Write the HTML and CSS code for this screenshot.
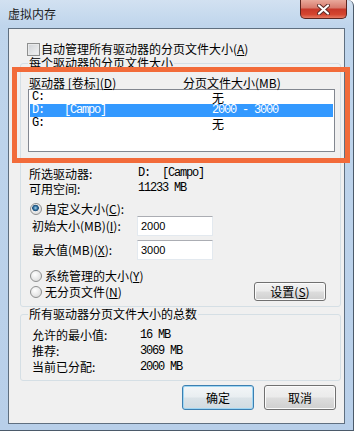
FILE: index.html
```html
<!DOCTYPE html>
<html lang="zh-CN">
<head>
    <meta charset="UTF-8">
    <title>虚拟内存</title>
    <link rel="stylesheet" href="styles.css">
</head>
<body>
    <div class="window">
        <div class="titlebar">
            <span class="title">虚拟内存</span>
            <span class="close">
                <svg width="13" height="11" viewBox="0 0 13 11">
                    <path d="M2 1.5 L11 9.5 M11 1.5 L2 9.5" stroke="#5a2a26" stroke-width="4" stroke-linecap="round"/>
                    <path d="M2 1.5 L11 9.5 M11 1.5 L2 9.5" stroke="#fff" stroke-width="2.2" stroke-linecap="round"/>
                </svg>
            </span>
        </div>

        <div class="client">
            <div class="check-row">
                <span class="checkbox"></span>
                <span>自动管理所有驱动器的分页文件大小(<u>A</u>)</span>
            </div>

            <fieldset class="group group-drives">
                <legend>每个驱动器的分页文件大小</legend>

                <div class="list-head">
                    <span class="col-drive">驱动器 [卷标](<u>D</u>)</span>
                    <span>分页文件大小(MB)</span>
                </div>

                <div class="listbox">
                    <div class="list-row">
                        <span class="c-drive mono">C:</span><span class="c-label mono"></span><span class="c-size">无</span>
                    </div>
                    <div class="list-row selected">
                        <span class="c-drive mono">D:</span><span class="c-label mono">[Campo]</span><span class="c-size mono">2000 - 3000</span>
                    </div>
                    <div class="list-row">
                        <span class="c-drive mono">G:</span><span class="c-label mono"></span><span class="c-size">无</span>
                    </div>
                </div>

                <div class="info-row first">
                    <span class="info-label">所选驱动器:</span><span class="mono">D:  [Campo]</span>
                </div>
                <div class="info-row">
                    <span class="info-label">可用空间:</span><span class="mono">11233 MB</span>
                </div>

                <div class="radio-row custom">
                    <span class="radio on"></span>
                    <span>自定义大小(<u>C</u>):</span>
                </div>
                <div class="field-row">
                    <span class="field-label">初始大小(MB)(<u>I</u>):</span>
                    <span class="textbox">2000</span>
                </div>
                <div class="field-row second">
                    <span class="field-label">最大值(MB)(<u>X</u>):</span>
                    <span class="textbox">3000</span>
                </div>

                <div class="radio-row system">
                    <span class="radio"></span>
                    <span>系统管理的大小(<u>Y</u>)</span>
                </div>
                <div class="radio-row none">
                    <span class="radio"></span>
                    <span>无分页文件(<u>N</u>)</span>
                    <span class="btn btn-set">设置(<u>S</u>)</span>
                </div>
            </fieldset>

            <fieldset class="group group-total">
                <legend>所有驱动器分页文件大小的总数</legend>
                <div class="total-row first">
                    <span class="total-label">允许的最小值:</span><span class="mono">16 MB</span>
                </div>
                <div class="total-row">
                    <span class="total-label">推荐:</span><span class="mono">3069 MB</span>
                </div>
                <div class="total-row">
                    <span class="total-label">当前已分配:</span><span class="mono">2000 MB</span>
                </div>
            </fieldset>

            <div class="dialog-buttons">
                <span class="btn btn-default">确定</span>
                <span class="btn">取消</span>
            </div>
        </div>

        <!-- orange highlight drawn over the screenshot -->
        <div class="annotation"></div>
    </div>
</body>
</html>
```

FILE: styles.css
```css
* {
    box-sizing: border-box;
}

body {
    margin: 0;
    font-family: "Noto Sans CJK SC", sans-serif;
    font-size: 12px;
    line-height: 12px;
    color: #000;
    background: #fff;
}

u {
    text-decoration: underline;
    text-underline-offset: 1px;
}

.mono {
    font-family: "Liberation Mono", "Noto Sans CJK SC", monospace;
    font-size: 12px;
    letter-spacing: -1.2px;
    white-space: pre;
}

/* window frame */
.window {
    position: relative;
    width: 354px;
    height: 431px;
    display: flex;
    flex-direction: column;
    padding: 0 8px 6px 8px;
    background: linear-gradient(to bottom, #d2e1f1 0px, #bfd5ec 26px, #b8cfe9 100%);
    border-right: 1px solid #4b5a6a;
    border-bottom: 1px solid #4b5a6a;
    border-top-right-radius: 6px;
}

.titlebar {
    height: 28px;
    display: flex;
    align-items: flex-start;
}

.title {
    padding-top: 7px;
    line-height: 13px;
    color: #1b1b1b;
}

.close {
    margin-left: auto;
    margin-right: -2px;
    width: 47px;
    height: 19px;
    display: flex;
    align-items: center;
    justify-content: center;
    border: 1px solid #5b2520;
    border-top: none;
    border-radius: 0 0 5px 5px;
    background: linear-gradient(to bottom, #e9a99b 0%, #d87c6e 42%, #c8392a 52%, #d4452f 80%, #e67a63 100%);
}

.client {
    flex: 1;
    display: flex;
    flex-direction: column;
    padding: 0 3px 0 11px;
    background: #f0f0f0;
    border: 1px solid #5f6f80;
}

/* top checkbox */
.check-row {
    display: flex;
    align-items: center;
    gap: 1px;
    height: 14px;
    margin-top: 13px;
    padding-left: 7px;
}

.checkbox {
    width: 13px;
    height: 13px;
    border: 1px solid #8e8f8f;
    background: linear-gradient(135deg, #cfd2d6, #f4f4f5);
    box-shadow: inset 0 0 0 1px #e8e9ea;
}

/* group boxes */
.group {
    margin: 1px 0 0 0;
    min-width: 0;
    padding: 0 6px 5px 7px;
    border: 1px solid #d5dfe5;
    border-radius: 3px;
}

.group legend {
    padding: 0 1px;
    line-height: 12px;
}

.list-head {
    display: flex;
    height: 12px;
    margin-top: 8px;
}

.col-drive {
    width: 155px;
    padding-left: 1px;
}

.listbox {
    width: 307px;
    height: 63px;
    padding-top: 1px;
    background: #fff;
    border: 1px solid #828790;
}

.list-row {
    display: flex;
    height: 13px;
    line-height: 13px;
    margin: 0 1px;
    padding-left: 2px;
}

.list-row.selected {
    background: #3399ff;
    color: #fff;
}

.c-drive {
    width: 32px;
}

.c-label {
    width: 148px;
}

.info-row {
    display: flex;
    height: 15px;
    line-height: 15px;
}

.info-row.first {
    margin-top: 14px;
}

.info-label {
    width: 110px;
    padding-left: 1px;
}

.radio-row {
    display: flex;
    align-items: center;
    gap: 3px;
    height: 14px;
    padding-left: 2px;
}

.radio-row.custom {
    height: 11px;
    margin-top: 7px;
}

.radio-row.system {
    margin-top: 9px;
}

.radio-row.none {
    height: 19px;
    margin-top: -1px;
}

.radio {
    flex: none;
    width: 12px;
    height: 12px;
    border-radius: 50%;
    border: 1px solid #8e8f8f;
    background: radial-gradient(circle at 40% 35%, #ffffff, #d4d4d4);
}

.radio.on {
    background:
        radial-gradient(circle at 45% 40%, #a9d4ee 0, #2f6d9c 2px, #1d4d78 3px, rgba(0, 0, 0, 0) 3.6px),
        radial-gradient(circle at 40% 35%, #ffffff, #d4d4d4);
}

.field-row {
    display: flex;
    align-items: center;
    height: 20px;
    margin-top: 2px;
}

.field-row.second {
    margin-top: 4px;
}

.field-label {
    width: 109px;
    padding-left: 4px;
}

.textbox {
    width: 76px;
    height: 20px;
    padding-left: 3px;
    line-height: 18px;
    font-family: "Liberation Sans", sans-serif;
    font-size: 11px;
    background: #fff;
    border: 1px solid #e3e9ef;
    border-top-color: #abadb3;
}

/* buttons */
.btn {
    width: 72px;
    height: 19px;
    display: flex;
    align-items: center;
    justify-content: center;
    border: 1px solid #707070;
    border-radius: 3px;
    background: linear-gradient(to bottom, #f2f2f2 0%, #ebebeb 48%, #dddddd 52%, #cfcfcf 100%);
    box-shadow: inset 0 0 0 1px #fbfbfb;
}

.btn-set {
    margin-left: auto;
    margin-right: 8px;
}

.total-row {
    display: flex;
    height: 16px;
    line-height: 16px;
}

.total-row.first {
    margin-top: 7px;
}

.total-label {
    width: 112px;
    padding-left: 4px;
}

.dialog-buttons {
    display: flex;
    justify-content: flex-end;
    gap: 10px;
    margin-top: 4px;
    margin-right: 5px;
}

.dialog-buttons .btn {
    height: 25px;
}

.btn-default {
    border-color: #3c7fb1;
    box-shadow: inset 0 0 0 1px #9fd6f3;
    background: linear-gradient(to bottom, #f3f6f8 0%, #e9eef1 48%, #dbe3e8 52%, #d1dbe1 100%);
}

/* screenshot annotation */
.annotation {
    position: absolute;
    left: 12px;
    top: 67px;
    width: 338px;
    height: 96px;
    border: 5px solid #f26b3a;
}
```
